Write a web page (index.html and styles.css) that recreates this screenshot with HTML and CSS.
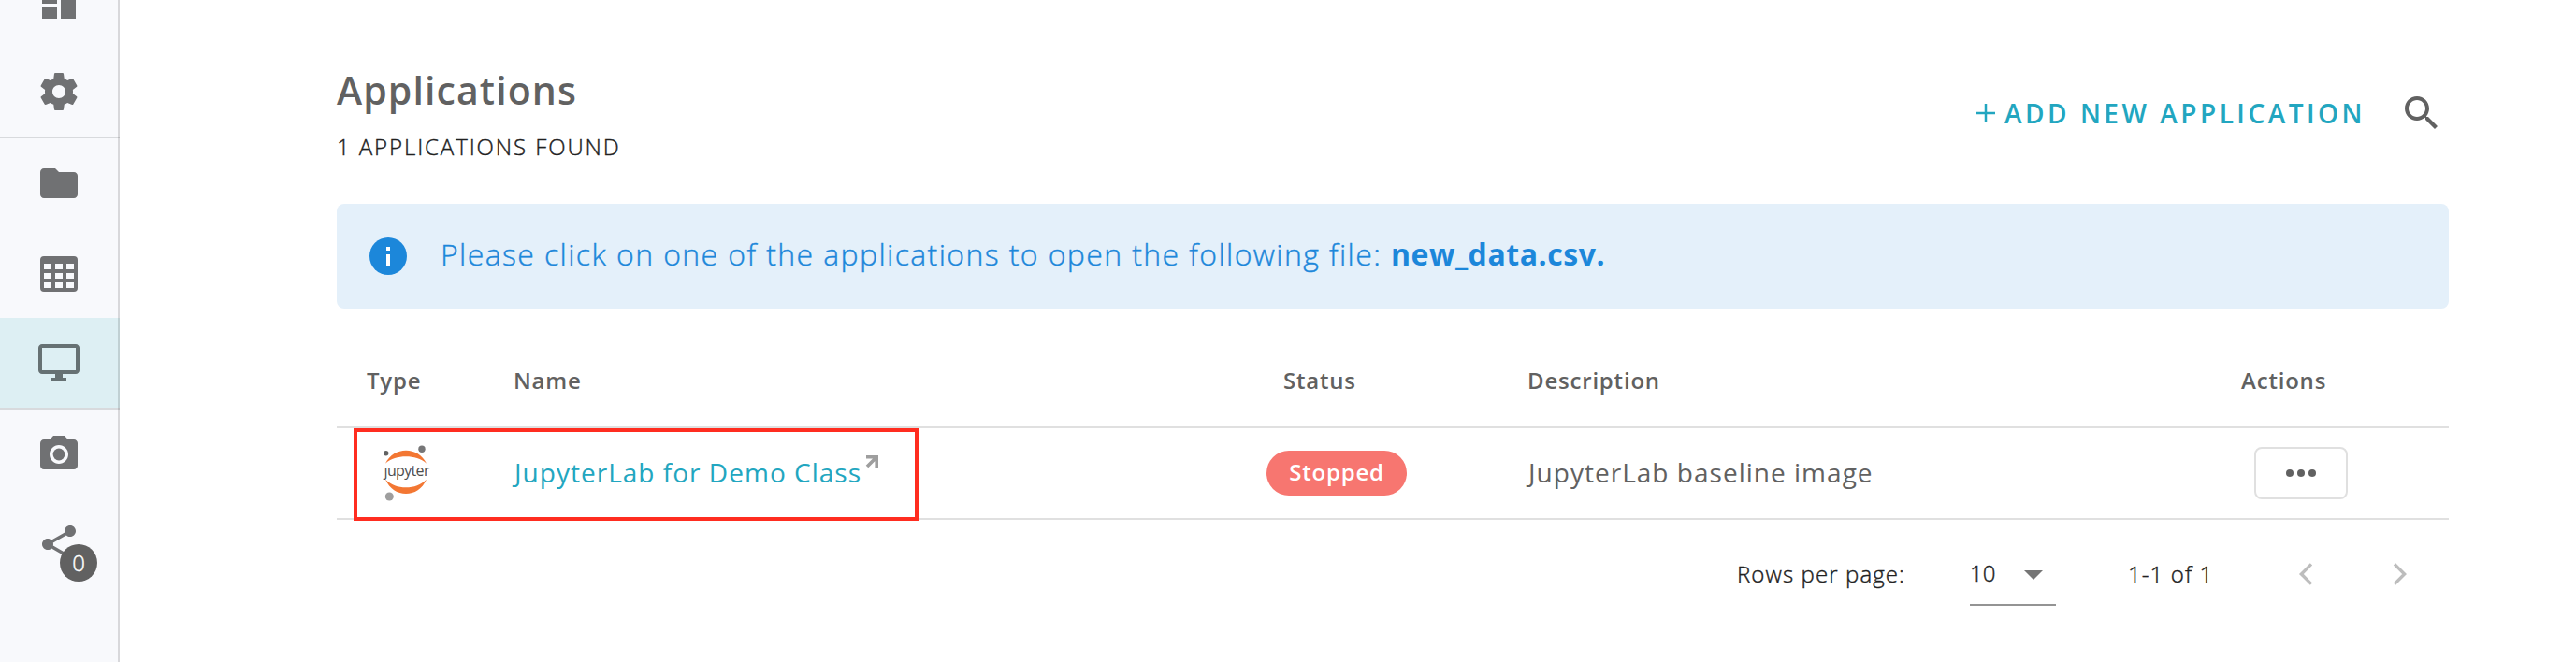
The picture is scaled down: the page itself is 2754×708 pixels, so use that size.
FILE: index.html
```html
<!DOCTYPE html>
<html lang="en">
<head>
<meta charset="utf-8">
<title>Applications</title>
<link rel="stylesheet" href="styles.css">
</head>
<body>
<nav class="sidebar">
  <a class="nav-item"><svg class="icon" viewBox="0 0 24 24"><path d="M3 13h8V3H3v10zm0 8h8v-6H3v6zm10 0h8V11h-8v10zm0-18v6h8V3h-8z"/></svg></a>
  <a class="nav-item"><svg class="icon" viewBox="0 0 24 24"><path d="M19.43 12.98c.04-.32.07-.64.07-.98s-.03-.66-.07-.98l2.11-1.65c.19-.15.24-.42.12-.64l-2-3.46c-.12-.22-.39-.3-.61-.22l-2.49 1c-.52-.4-1.08-.73-1.69-.98l-.38-2.65C14.46 2.18 14.25 2 14 2h-4c-.25 0-.46.18-.49.42l-.38 2.65c-.61.25-1.17.59-1.69.98l-2.49-1c-.23-.09-.49 0-.61.22l-2 3.46c-.13.22-.07.49.12.64l2.11 1.65c-.04.32-.07.65-.07.98s.03.66.07.98l-2.11 1.65c-.19.15-.24.42-.12.64l2 3.46c.12.22.39.3.61.22l2.49-1c.52.4 1.08.73 1.69.98l.38 2.65c.03.24.24.42.49.42h4c.25 0 .46-.18.49-.42l.38-2.65c.61-.25 1.17-.59 1.69-.98l2.49 1c.23.09.49 0 .61-.22l2-3.46c.12-.22.07-.49-.12-.64l-2.11-1.65zM12 15.5c-1.93 0-3.500-1.570-3.500-3.500s1.570-3.500 3.500-3.500 3.500 1.570 3.500 3.500-1.570 3.500-3.500 3.500z"/></svg></a>
  <a class="nav-item nav-item--ruled"><svg class="icon" viewBox="0 0 24 24"><path d="M10 4H4c-1.100 0-1.990.9-1.990 2L2 18c0 1.100.9 2 2 2h16c1.100 0 2-.9 2-2V8c0-1.100-.9-2-2-2h-8l-2-2z"/></svg></a>
  <a class="nav-item"><svg class="icon" viewBox="0 0 24 24"><path fill-rule="evenodd" d="M4 3h16a2 2 0 0 1 2 2v15a2 2 0 0 1-2 2H4a2 2 0 0 1-2-2V5a2 2 0 0 1 2-2zM4 7v3h4V7zm6 0v3h4V7zm6 0v3h4V7zM4 12v3h4v-3zm6 0v3h4v-3zm6 0v3h4v-3zM4 17v3h4v-3zm6 0v3h4v-3zm6 0v3h4v-3z"/></svg></a>
  <a class="nav-item nav-item--active"><svg class="icon" viewBox="0 0 24 24"><path d="M21 2H3c-1.100 0-2 .9-2 2v12c0 1.100.9 2 2 2h7v2H8v2h8v-2h-2v-2h7c1.100 0 2-.9 2-2V4c0-1.100-.9-2-2-2zm0 14H3V4h18v12z"/></svg></a>
  <a class="nav-item nav-item--ruled"><svg class="icon" viewBox="0 0 24 24"><circle cx="12" cy="12" r="3.200"/><path d="M9 2L7.170 4H4c-1.100 0-2 .9-2 2v12c0 1.100.9 2 2 2h16c1.100 0 2-.9 2-2V6c0-1.100-.9-2-2-2h-3.170L15 2H9zm3 15c-2.760 0-5-2.240-5-5s2.240-5 5-5 5 2.240 5 5-2.240 5-5 5z"/></svg></a>
  <a class="nav-item"><svg class="icon" viewBox="0 0 24 24"><path d="M18 16.080c-.76 0-1.440.3-1.960.77L8.910 12.700c.05-.23.09-.46.09-.7s-.04-.47-.09-.7l7.050-4.110c.54.5 1.250.81 2.040.81 1.660 0 3-1.340 3-3s-1.340-3-3-3-3 1.340-3 3c0 .24.04.47.09.7L8.040 9.810C7.500 9.310 6.790 9 6 9c-1.660 0-3 1.340-3 3s1.340 3 3 3c.79 0 1.500-.31 2.040-.81l7.120 4.160c-.05.21-.08.43-.08.65 0 1.610 1.310 2.920 2.920 2.920s2.920-1.310 2.920-2.920-1.310-2.920-2.920-2.920z"/></svg><span class="badge">0</span></a>
</nav>
<main class="content">
  <header class="page-head">
    <div>
      <h1 class="title">Applications</h1>
      <p class="count">1 APPLICATIONS FOUND</p>
    </div>
    <div class="tools">
      <button class="add"><svg class="plus" viewBox="0 0 20 20"><path d="M10 0v20M0 10h20"/></svg><span>ADD NEW APPLICATION</span></button>
      <svg class="search" viewBox="0 0 24 24"><path d="M15.500 14h-.79l-.28-.27C15.410 12.590 16 11.110 16 9.500 16 5.910 13.090 3 9.500 3S3 5.910 3 9.500 5.910 16 9.500 16c1.610 0 3.090-.59 4.230-1.570l.27.28v.79l5 4.990L20.490 19l-4.990-5zm-6 0C7.010 14 5 11.990 5 9.500S7.010 5 9.500 5 14 7.010 14 9.500 11.990 14 9.500 14z"/></svg>
    </div>
  </header>
  <section class="notice">
    <svg class="info" viewBox="0 0 40 40"><circle cx="20" cy="20" r="20"/><path d="M18 10h4v4h-4zM18 18h4v12h-4z"/></svg>
    <p class="notice-text">Please click on one of the applications to open the following file: <b>new_data.csv.</b></p>
  </section>
  <section class="table">
    <div class="row row--head">
      <span class="c-type">Type</span><span class="c-name">Name</span><span class="c-status">Status</span><span class="c-desc">Description</span><span class="c-actions">Actions</span>
    </div>
    <div class="row">
      <span class="c-logo"><svg class="jupyter" viewBox="0 0 58 76"><path fill="#f37733" d="M7 27.700C11.500 18.500 20 13.700 29 13.700S46.500 18.500 51 27.700C45 22.500 37.500 20.300 29 20.300S13 22.500 7 27.700zM7 44.700C13 50.500 20.500 53.300 29 53.300S45 50.500 51 44.700C46.500 55 38 60 29 60S11.500 55 7 44.700z"/><circle cx="7.700" cy="16.700" r="2.700" fill="#616262"/><circle cx="46" cy="12.300" r="3.700" fill="#767677"/><circle cx="11.300" cy="63" r="4.500" fill="#9e9e9e"/><text class="wordmark" x="5.500" y="41.300" textLength="49" lengthAdjust="spacing">&#x237;upyter</text></svg></span>
      <a class="name"><span>JupyterLab for Demo Class</span><svg class="ext" viewBox="0 0 14 14"><path d="M1 1.800h11.200V13M12 2L2 12"/></svg></a>
      <span class="chip">Stopped</span>
      <span class="desc">JupyterLab baseline image</span>
      <button class="more"><svg viewBox="0 0 32 8"><circle cx="4" cy="4" r="4"/><circle cx="16" cy="4" r="4"/><circle cx="28" cy="4" r="4"/></svg></button>
      <div class="highlight"></div>
    </div>
  </section>
  <footer class="pager">
    <span class="pager-label">Rows per page:</span>
    <span class="select"><span>10</span><svg class="caret" viewBox="0 0 20 10"><path d="M0 0h20L10 10z"/></svg></span>
    <span class="range">1-1 of 1</span>
    <svg class="chev" viewBox="0 0 16 24"><path d="M14 1.400L3.400 12 14 22.600"/></svg>
    <svg class="chev chev--next" viewBox="0 0 16 24"><path d="M2 1.400L12.600 12 2 22.600"/></svg>
  </footer>
</main>
</body>
</html>
```
FILE: styles.css
```css
* { box-sizing: border-box; }
body {
  margin: 0;
  height: 708px;
  overflow: hidden;
  display: flex;
  background: #fff;
  color: #212121;
  font-family: "Open Sans", "Noto Sans", sans-serif;
}
h1, p { margin: 0; }
button { background: none; border: 0; padding: 0; font: inherit; }
svg { display: block; }

.sidebar {
  position: relative;
  width: 128px;
  height: 708px;
  flex: none;
  background: #f8f9fc;
  overflow: hidden;
}
.sidebar::after {
  content: "";
  position: absolute;
  top: 0;
  right: 0;
  width: 2px;
  height: 100%;
  background: rgba(0, 0, 0, .13);
}
.nav-item {
  height: 96px;
  padding-right: 2px;
  display: flex;
  align-items: center;
  justify-content: center;
  position: relative;
}
.nav-item:first-child { margin-top: -46px; }
.nav-item--ruled { height: 98px; border-top: 2px solid #d8dadd; }
.nav-item--active { background: #ddeff3; }
.nav-item--active .icon { fill: #667173; }
.icon { width: 48px; height: 48px; fill: #707173; }
.badge {
  position: absolute;
  left: 64px;
  top: 48px;
  width: 40px;
  height: 40px;
  border-radius: 50%;
  background: #616161;
  color: #fff;
  font-size: 24px;
  font-weight: 300;
  line-height: 39px;
  text-align: center;
}
.badge, .count, .notice-text, .pager { -webkit-text-stroke: .4px currentColor; }

.content { width: 2258px; margin-left: 232px; }
.page-head { height: 218px; padding-top: 72px; display: flex; justify-content: space-between; }
.title { font-size: 41px; line-height: 48px; font-weight: 600; letter-spacing: 1.1px; color: #616161; }
.count { margin-top: 19px; font-size: 24px; line-height: 36px; font-weight: 300; letter-spacing: 1.9px; }
.tools { display: flex; align-items: center; height: 98px; padding-right: 5px; }
.add { display: flex; align-items: center; color: #22a6c0; font-size: 28px; font-weight: 600; line-height: 40px; letter-spacing: 3.5px; margin-right: 36px; }
.plus { width: 20px; height: 20px; margin-right: 10px; stroke: #22a6c0; stroke-width: 2.5; }
.search { width: 48px; height: 48px; fill: #616161; }

.notice {
  height: 112px;
  border-radius: 8px;
  background: #e4f0fa;
  display: flex;
  align-items: center;
  padding-left: 35px;
}
.info { width: 40px; height: 40px; fill: #1c87da; margin-right: 36px; }
.info path { fill: #fff; }
.notice-text { color: #1c87da; font-size: 32px; line-height: 44px; font-weight: 300; letter-spacing: 1.39px; padding-bottom: 5px; }
.notice-text b { font-weight: 700; letter-spacing: .55px; -webkit-text-stroke: 0; }

.row {
  position: relative;
  height: 98px;
  border-bottom: 2px solid #e0e0e0;
  display: grid;
  grid-template-columns: 190px 804px 280px 776px 208px;
  align-items: center;
  font-size: 28px;
  letter-spacing: 1.02px;
  color: #616161;
}
.row--head { height: 128px; padding-top: 27px; font-size: 24px; font-weight: 600; letter-spacing: .8px; }
.c-type { padding-left: 32px; }
.c-name, .c-desc { margin-left: -1px; }
.c-status { padding-left: 18px; }
.c-actions { margin-left: -14px; }
.c-logo { padding-left: 45px; }
.jupyter { width: 58px; height: 76px; overflow: visible; }
.wordmark { font-size: 16px; fill: #4e4e4e; letter-spacing: 0; }
.name { display: flex; color: #22a6c0; padding-bottom: 3px; }
.ext { width: 14px; height: 14px; margin: 1px 0 0 4px; fill: none; stroke: #9e9e9e; stroke-width: 3.6; }
.chip { width: 150px; height: 48px; border-radius: 24px; background: #f77670; color: #fff; font-size: 24px; font-weight: 600; line-height: 45px; letter-spacing: .8px; text-align: center; }
.desc { padding-bottom: 3px; }
.more { width: 100px; height: 56px; border: 2px solid #e0e0e0; border-radius: 8px; display: flex; align-items: center; justify-content: center; }
.more svg { width: 32px; height: 8px; fill: #616161; }
.highlight { position: absolute; left: 18px; top: 0; width: 604px; height: 99px; border: 4px solid #ff2d20; }

.pager { display: flex; align-items: center; height: 114px; font-size: 24px; font-weight: 300; letter-spacing: 1.1px; padding-left: 1497px; }
.pager-label { width: 249px; }
.select { width: 92px; height: 70px; display: flex; align-items: center; justify-content: space-between; padding-right: 14px; border-bottom: 2px solid #949494; letter-spacing: 0; }
.caret { width: 20px; height: 10px; margin-top: 5px; fill: #757575; }
.range { margin-left: 77px; width: 182px; }
.chev { width: 16px; height: 24px; margin-top: 2px; fill: none; stroke: #bdbdbd; stroke-width: 3.4; }
.chev--next { margin-left: 85px; }
```
